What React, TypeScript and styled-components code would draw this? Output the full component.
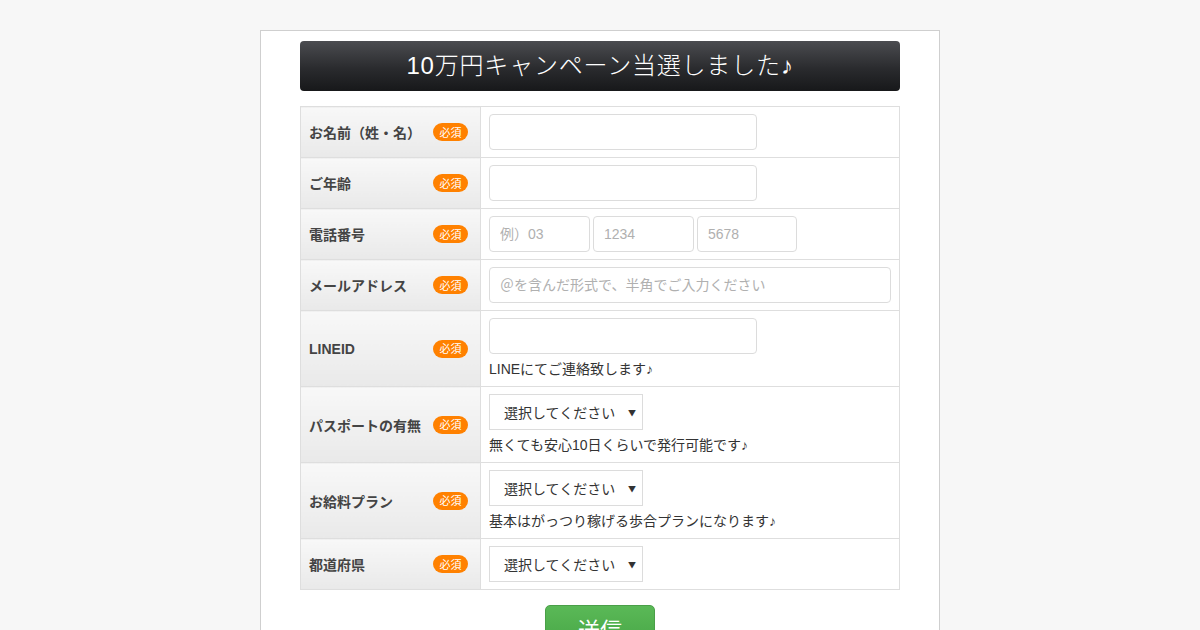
import React from "react";
import styled, { createGlobalStyle } from "styled-components";

const Global = createGlobalStyle`
  html, body { margin: 0; padding: 0; background: #f7f7f7; }
  body { font-family: "Liberation Sans", "Noto Sans CJK JP", sans-serif; color: #333; }
  * { box-sizing: border-box; }
`;

const Page = styled.div`
  padding-top: 30px;
  display: flex;
  justify-content: center;
`;

const Container = styled.div`
  width: 680px;
  background: #fff;
  border: 1px solid #cfcfcf;
  border-bottom: none;
  padding: 10px 39px 30px;
`;

const Title = styled.h1`
  margin: 0;
  height: 50px;
  border-radius: 4px;
  background: linear-gradient(to bottom, #4b4c50 0%, #2a2b2e 55%, #17181a 100%);
  color: #fff;
  font-family: "Liberation Sans", "Noto Sans CJK JP", sans-serif;
  font-weight: 300;
  font-size: 24px;
  letter-spacing: 0.8px;
  line-height: 50px;
  text-align: center;
`;

const Table = styled.table`
  margin-top: 15px;
  width: 600px;
  border-collapse: collapse;
  font-size: 14px;
`;

const LabelCell = styled.th`
  width: 180px;
  border: 1px solid #dedede;
  background: linear-gradient(to bottom, #f8f8f8 0%, #e9e9e9 100%);
  padding: 0 12px 0 8px;
  text-align: left;
  vertical-align: middle;
`;

const LabelInner = styled.div`
  display: flex;
  align-items: center;
  justify-content: space-between;
  font-family: "Liberation Sans", "Noto Sans CJK JP", sans-serif;
  font-weight: 700;
  font-size: 14px;
  color: #444;
`;

const Badge = styled.span`
  display: inline-flex;
  align-items: center;
  justify-content: center;
  width: 35px;
  height: 18px;
  border-radius: 9px;
  background: #ff8100;
  color: #fff;
  font-family: "Noto Sans CJK JP", sans-serif;
  font-weight: 400;
  font-size: 11px;
  line-height: 1;
`;

const FieldCell = styled.td`
  border: 1px solid #dedede;
  padding: 7px 8px;
  vertical-align: middle;
`;

const Input = styled.input<{ $w?: number }>`
  display: block;
  width: ${(p) => (p.$w ? `${p.$w}px` : "100%")};
  height: 36px;
  border: 1px solid #dcdcdc;
  border-radius: 4px;
  padding: 0 10px;
  font-family: "Liberation Sans", "Noto Sans CJK JP", sans-serif;
  font-size: 14px;
  color: #333;
  background: #fff;
  outline: none;
  &::placeholder { color: #b0b0b0; }
`;

const TelRow = styled.div`
  display: flex;
  gap: 3px;
`;

const SelectBox = styled.div`
  position: relative;
  width: 154px;
  height: 36px;
  border: 1px solid #dcdcdc;
  background: #fff;
  display: flex;
  align-items: center;
  padding-left: 14px;
  font-family: "Noto Sans CJK JP", sans-serif;
  font-size: 14px;
  color: #333;
`;

const Arrow = styled.span`
  position: absolute;
  right: 6px;
  top: 50%;
  transform: translateY(-50%);
  font-size: 8px;
  color: #333;
`;

const Note = styled.p`
  margin: 5px 0 0;
  line-height: 20px;
  font-family: "Liberation Sans", "Noto Sans CJK JP", sans-serif;
  font-size: 14px;
  color: #333;
`;

const ButtonRow = styled.div`
  display: flex;
  justify-content: center;
  margin-top: 15px;
`;

const Submit = styled.button`
  width: 110px;
  height: 46px;
  border: 1px solid #4a9f48;
  border-radius: 5px;
  background: linear-gradient(to bottom, #5ab957 0%, #46a444 100%);
  color: #fff;
  font-family: "Noto Sans CJK JP", sans-serif;
  font-size: 22px;
  line-height: 44px;
  padding: 0;
`;

const Label: React.FC<{ text: string }> = ({ text }) => (
  <LabelCell>
    <LabelInner>
      <span>{text}</span>
      <Badge>必須</Badge>
    </LabelInner>
  </LabelCell>
);

const Select: React.FC = () => (
  <SelectBox>
    選択してください
    <Arrow>▼</Arrow>
  </SelectBox>
);

export default function App() {
  return (
    <>
      <Global />
      <Page>
        <Container>
          <Title>10万円キャンペーン当選しました♪</Title>
          <Table>
            <tbody>
              <tr>
                <Label text="お名前（姓・名）" />
                <FieldCell><Input $w={268} /></FieldCell>
              </tr>
              <tr>
                <Label text="ご年齢" />
                <FieldCell><Input $w={268} /></FieldCell>
              </tr>
              <tr>
                <Label text="電話番号" />
                <FieldCell>
                  <TelRow>
                    <Input $w={101} placeholder="例）03" />
                    <Input $w={101} placeholder="1234" />
                    <Input $w={100} placeholder="5678" />
                  </TelRow>
                </FieldCell>
              </tr>
              <tr>
                <Label text="メールアドレス" />
                <FieldCell><Input placeholder="＠を含んだ形式で、半角でご入力ください" /></FieldCell>
              </tr>
              <tr>
                <Label text="LINEID" />
                <FieldCell>
                  <Input $w={268} />
                  <Note>LINEにてご連絡致します♪</Note>
                </FieldCell>
              </tr>
              <tr>
                <Label text="パスポートの有無" />
                <FieldCell>
                  <Select />
                  <Note>無くても安心10日くらいで発行可能です♪</Note>
                </FieldCell>
              </tr>
              <tr>
                <Label text="お給料プラン" />
                <FieldCell>
                  <Select />
                  <Note>基本はがっつり稼げる歩合プランになります♪</Note>
                </FieldCell>
              </tr>
              <tr>
                <Label text="都道府県" />
                <FieldCell><Select /></FieldCell>
              </tr>
            </tbody>
          </Table>
          <ButtonRow>
            <Submit>送信</Submit>
          </ButtonRow>
        </Container>
      </Page>
    </>
  );
}
